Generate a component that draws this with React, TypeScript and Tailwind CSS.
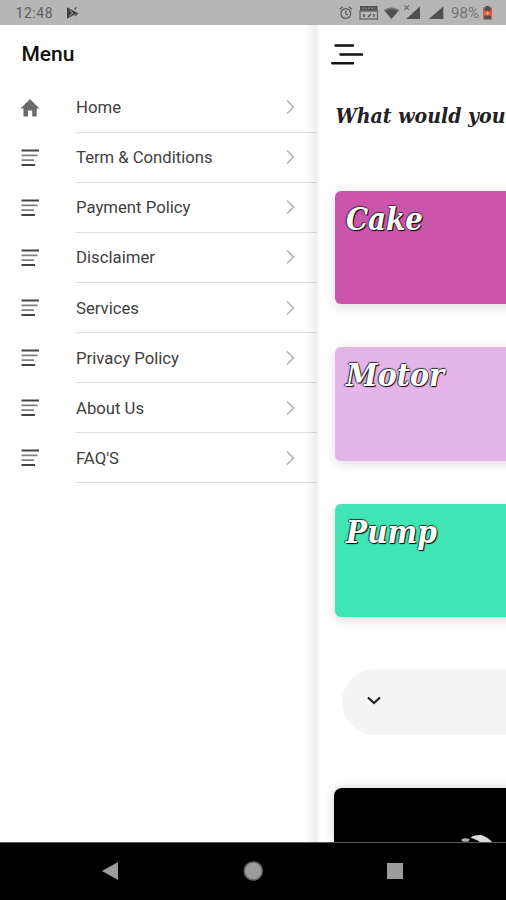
const menuItems = [
  { name: "Home", icon: "home", width: 45 },
  { name: "Term & Conditions", icon: "lines", width: 136.5 },
  { name: "Payment Policy", icon: "lines", width: 114.5 },
  { name: "Disclaimer", icon: "lines", width: 79 },
  { name: "Services", icon: "lines", width: 63 },
  { name: "Privacy Policy", icon: "lines", width: 103 },
  { name: "About Us", icon: "lines", width: 68 },
  { name: "FAQ'S", icon: "lines", width: 43 },
];

const cards = [
  { title: "Cake", color: "bg-[#ca55ab]", width: 77 },
  { title: "Motor", color: "bg-[#e4b4e9]", width: 98 },
  { title: "Pump", color: "bg-[#3fe6b3]", width: 91 },
];

const HomeIcon = () => (
  <svg width="20" height="18" viewBox="0 0 20 18" fill="#6b6b6b">
    <path d="M10 0 .5 9.500H3.500V17.500H8v-6h4.200v6H16.700V9.500h2.800z" />
  </svg>
);

const LinesIcon = () => (
  <svg width="18" height="18" viewBox="0 0 18 18" strokeWidth="1.8" fill="none">
    <path d="M0.500 1.500H18M0.500 16H14" stroke="#444" />
    <path d="M0.500 6.300h16M0.500 11.200h12.500" stroke="#808080" />
  </svg>
);

const StatusBar = () => (
  <div className="flex h-[25px] shrink-0 bg-[#b6b6b6]">
    <svg width="506" height="25" viewBox="0 0 506 25" fill="#505050">
      <g className="font-['Roboto']" fontSize="14">
        <text x="15.5" y="18" textLength="37" fill="#606060">12:48</text>
        <text x="451" y="18" textLength="28" lengthAdjust="spacingAndGlyphs" fill="#747474">98%</text>
      </g>
      <path d="M67 7.2 77.5 13 67 18.7z" fill="#3e3e3e" />
      <path d="m69.5 10 3.2 3-3.2 3" stroke="#b6b6b6" fill="none" />
      <path d="m74.5 9.5 2-2M75 16l3-3" stroke="#505050" strokeWidth="1.3" />
      <g fill="none" stroke="#5a5a5a" strokeWidth="1.2">
        <circle cx="345.8" cy="13.5" r="4.9" />
        <path d="M345.8 10.5v3.3l2.2 1.3M339.7 9.2l3-2.5M352 9.2l-3-2.5" />
      </g>
      <path d="M360 6h17.500v5h-17.500z" />
      <path d="M360 11h17.500v8h-17.500z" fill="none" stroke="#6c6c6c" strokeWidth="1.3" />
      <path d="M362 8.2h13" stroke="#999" strokeDasharray="2 1" />
      <path d="M364 14v3M368 17l3-3M374 14v3" stroke="#505050" strokeWidth="1.4" />
      <path d="M384 10.3Q391.5 5 399 10.3L391.5 19z" />
      <path d="M384.5 10.500Q391.5 6 398.500 10.500" stroke="#7b7b7b" strokeWidth="1.5" fill="none" />
      <path d="M420 6.5V19h-14z" />
      <path d="m404.3 5.4 4.5 4.5m0-4.5-4.5 4.5" stroke="#686868" strokeWidth="1.1" />
      <path d="M443.3 6.5V19h-14.5z" />
      <path d="M485.500 6h4v1.500h2V19.500h-8V7.500h2z" />
      <path d="M484 7.500V19.300M491.200 7.500V19.300" stroke="#e2562f" strokeWidth="1.2" />
      <path d="M484 11h7v4.500h-7z" fill="#e25a35" />
      <path d="M487.500 11.500v3.500M485.800 13.200h3.400" stroke="#f6b49d" strokeWidth="1" />
    </svg>
  </div>
);

const Drawer = () => (
  <div className="relative z-10 flex w-[317px] shrink-0 flex-col bg-white shadow-[0_0_4px_rgba(0,0,0,0.1)]">
    <div className="absolute inset-y-0 right-0 w-3 bg-linear-to-r from-transparent to-black/7"></div>
    <h1 className="flex h-[57.6px] items-center pl-[21px] text-black">
      <svg width="56" height="30">
        <text x="0.5" y="22" fontSize="20.5" textLength="53" lengthAdjust="spacingAndGlyphs" fill="#111" className="font-['Roboto'] font-medium">Menu</text>
      </svg>
    </h1>
    {menuItems.map((item) => (
      <div key={item.name} className="flex h-[50.1px] pl-[21px]">
        <div className={item.icon === "home" ? "-ml-px w-14 pt-4" : "w-[55px] pt-4"}>
          {item.icon === "home" ? <HomeIcon /> : <LinesIcon />}
        </div>
        <div className="flex flex-1 items-center justify-between border-b border-[#dedede] pr-[21px]">
          <svg width="150" height="26" fill="#404040">
            <text x="0" y="19" fontSize="16" textLength={item.width} lengthAdjust="spacingAndGlyphs" className="font-['Roboto']">
              {item.name}
            </text>
          </svg>
          <svg width="11" height="16" viewBox="0 0 11 16" fill="none" stroke="#b4b4b4" strokeWidth="1.6">
            <path d="M2 1.500 8.500 8 2 14.500" />
          </svg>
        </div>
      </div>
    ))}
  </div>
);

const Content = () => (
  <div className="flex flex-1 flex-col overflow-hidden bg-white">
    <div className="h-[60px] pl-3.5 pt-[17px]">
      <svg width="34" height="24" viewBox="0 0 34 24" stroke="#111" strokeWidth="2.5" strokeLinecap="round">
        <path d="M4.500 3.500h17.500M9.500 12.500h21.500M1.300 21.300h20.700" />
      </svg>
    </div>
    <div className="h-[105.5px] pl-[18px] pt-4">
      <svg width="171" height="32">
        <text x="0.5" y="21.5" fontSize="19.5" textLength="170" lengthAdjust="spacingAndGlyphs" fill="#222" className="font-['DejaVu_Serif'] font-bold italic">
          What would you
        </text>
      </svg>
    </div>
    <div className="flex flex-col gap-[43px] pl-[18px]">
      {cards.map((card) => (
        <div key={card.title} className={`h-[113.5px] w-[320px] rounded-md shadow-[0_3px_12px_rgba(0,0,0,0.14)] ${card.color}`}>
          <svg width="140" height="60" className="overflow-visible">
            <text
              x="11"
              y="39"
              fontSize="31"
              textLength={card.width}
              lengthAdjust="spacingAndGlyphs"
              fill="#fff"
              className="font-['DejaVu_Serif'] font-bold italic [text-shadow:1px_1px_1px_#000,-1px_0_1px_#333,0_-1px_1px_#333]"
            >
              {card.title}
            </text>
          </svg>
        </div>
      ))}
    </div>
    <div className="ml-[25px] mt-[52px] flex h-[66px] w-[400px] shrink-0 items-center rounded-full bg-[#f4f4f4] pb-0.5 pl-6">
      <svg width="16" height="12" viewBox="0 0 16 12" fill="none" stroke="#222" strokeWidth="2.2">
        <path d="m2 2.500 6 5.500 6-5.500" />
      </svg>
    </div>
    <div className="ml-[17px] mt-[52.5px] h-[54px] w-[320px] shrink-0 rounded-t-lg bg-black shadow-[0_0_12px_rgba(0,0,0,0.16)]">
      <svg width="172" height="54" viewBox="0 0 172 54">
        <ellipse cx="131.500" cy="52" rx="4" ry="1.800" fill="#b0b0b0" />
        <path d="M136.500 49.500Q140 46.500 147 47 153 48.500 158 54H146Q142 51.500 136.500 49.500z" fill="#dadada" />
      </svg>
    </div>
  </div>
);

const NavBar = () => (
  <div className="flex h-[58px] shrink-0 border-t border-[#555] bg-black">
    <svg width="506" height="57" viewBox="0 0 506 57" fill="#9c9c9c">
      <path d="M102 28 118 19v18z" />
      <circle cx="253.3" cy="28" r="9" stroke="#666" strokeWidth="1.5" />
      <path d="M387 20h16v16h-16z" />
    </svg>
  </div>
);

const App = () => (
  <div className="flex h-[900px] w-[506px] flex-col overflow-hidden bg-white">
    <StatusBar />
    <div className="flex h-[817px] shrink-0 overflow-hidden">
      <Drawer />
      <Content />
    </div>
    <NavBar />
  </div>
);
export default App;
